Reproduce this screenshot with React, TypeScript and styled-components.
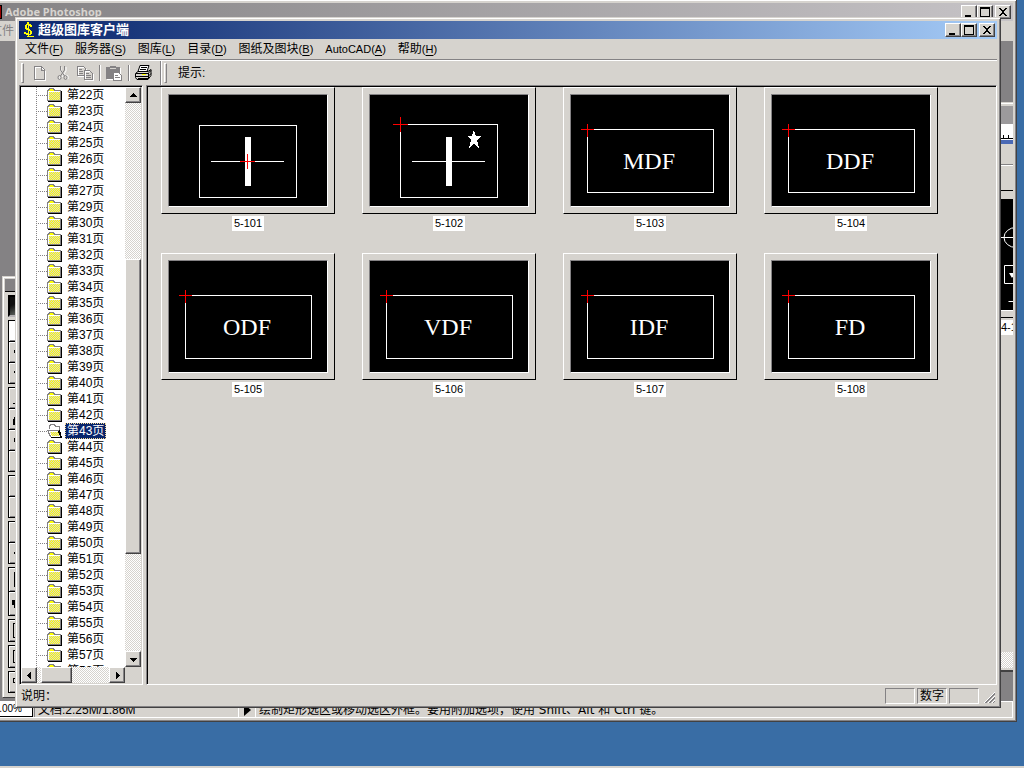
import React from 'react';
import styled, { createGlobalStyle, css } from 'styled-components';

const face = '#d6d3ce';
const shade = '#848284';
const dark = '#424142';
const dither = css`
  background: repeating-conic-gradient(#ffffff 0 25%, ${face} 0 50%) 0 0 / 2px 2px;
`;

const GlobalStyle = createGlobalStyle`
  * { box-sizing: border-box; }
  html, body { margin: 0; height: 100%; overflow: hidden; }
  body {
    font-family: "Liberation Sans", "Noto Sans CJK SC", sans-serif;
    font-size: 12px;
    line-height: 16px;
    color: #000;
  }
  button, input { font: inherit; color: inherit; border: 0; padding: 0; border-radius: 0; }
  ul { list-style: none; margin: 0; padding: 0; }
  svg { display: block; flex: none; }
`;

const Desktop = styled.div`
  position: relative;
  height: 100vh;
  overflow: hidden;
  background: #396da5;
  border-bottom: 2px solid ${face};
`;

const WindowFrame = styled.section`
  position: absolute;
  display: flex;
  flex-direction: column;
  background: ${face};
  border: 1px solid;
  border-color: ${face} ${dark} ${dark} ${face};
  box-shadow: inset 1px 1px 0 #fff, inset -1px -1px 0 ${shade};
  padding: 3px;
  overflow: hidden;
`;

const BackWindow = styled(WindowFrame)`
  top: -1px;
  left: -20px;
  right: 7px;
  bottom: 44px;
`;

const FrontWindow = styled(WindowFrame)`
  top: 17px;
  left: 15px;
  right: 23px;
  bottom: 58px;
`;

const TitleBar = styled.header<{ $active?: boolean }>`
  display: flex;
  flex: none;
  align-items: center;
  height: 18px;
  padding: 0 2px 0 4px;
  gap: 3px;
  font-weight: bold;
  font-family: ${p => (p.$active ? 'inherit' : '"Noto Sans", sans-serif')};
  font-size: ${p => (p.$active ? '13px' : '11px')};
  color: ${p => (p.$active ? '#fff' : face)};
  background: ${p =>
    p.$active
      ? 'linear-gradient(90deg, #08246b, #a5cbf7)'
      : 'linear-gradient(90deg, #848284, #c6c3c6)'};
`;

const TitleText = styled.h1`
  flex: 1;
  margin: 0;
  font: inherit;
  line-height: 18px;
  white-space: nowrap;
`;

const Raised = styled.button`
  display: flex;
  flex: none;
  align-items: center;
  justify-content: center;
  background: ${face};
  border: 1px solid;
  border-color: #fff ${dark} ${dark} #fff;
  box-shadow: inset -1px -1px 0 ${shade};
`;

const CaptionButton = styled(Raised)`
  width: 16px;
  height: 14px;
`;

const CaptionButtons = styled.div`
  display: flex;
  & > :last-child { margin-left: 2px; }
`;

const MenuBar = styled.nav`
  display: flex;
  flex: none;
  height: 20px;
`;

const MenuItem = styled.button<{ $small?: boolean }>`
  background: none;
  padding: 0 6px;
  line-height: 20px;
  white-space: nowrap;
  font-size: ${p => (p.$small ? '11px' : '12px')};
`;

const Mnemonic = styled.span`
  font-size: 11px;
  u { text-underline-offset: 2px; }
`;

const Toolbar = styled.div`
  display: flex;
  flex: none;
  align-items: center;
  height: 26px;
  border-top: 1px solid ${shade};
  box-shadow: inset 0 1px 0 #fff;
  padding: 1px 2px 0;
`;

const Grip = styled.span`
  width: 3px;
  height: 20px;
  border: 1px solid;
  border-color: #fff ${shade} ${shade} #fff;
`;

const ToolButton = styled.button`
  display: flex;
  align-items: center;
  justify-content: center;
  width: 23px;
  height: 22px;
  background: none;
`;

const Divider = styled.span<{ $tall?: boolean }>`
  width: 2px;
  height: ${p => (p.$tall ? '24px' : '16px')};
  margin: 0 2px;
  border-left: 1px solid ${shade};
  border-right: 1px solid #fff;
`;

const ToolGroup = styled.div`
  display: flex;
  align-items: center;
  padding: 0 3px 0 4px;
`;

const Hint = styled.span`
  padding-left: 11px;
`;

const Body = styled.main`
  display: flex;
  flex: 1;
  min-height: 0;
  gap: 3px;
`;

const Sunken = styled.div`
  border: 1px solid;
  border-color: ${shade} #fff #fff ${shade};
  box-shadow: inset 1px 1px 0 #000;
  padding: 1px;
  min-height: 0;
`;

const TreePane = styled(Sunken)`
  display: grid;
  flex: none;
  width: 124px;
  grid-template: minmax(0, 1fr) 16px / minmax(0, 1fr) 16px;
`;

const Tree = styled.ul`
  overflow: hidden;
  background:
    repeating-linear-gradient(${shade} 0 1px, transparent 1px 2px) 15px 0 / 1px 100% no-repeat,
    #fff;
`;

const TreeRow = styled.li`
  display: flex;
  align-items: center;
  height: 16px;
  padding-left: 15px;
`;

const Branch = styled.span`
  width: 11px;
  height: 1px;
  background: repeating-linear-gradient(90deg, ${shade} 0 1px, transparent 1px 2px);
`;

const TreeLabel = styled.button<{ $selected: boolean }>`
  height: 16px;
  margin-left: 2px;
  padding: 0 1px;
  line-height: 14px;
  white-space: nowrap;
  color: ${p => (p.$selected ? '#fff' : '#000')};
  background: ${p => (p.$selected ? '#08246b' : 'none')};
  border: 1px dotted ${p => (p.$selected ? '#f7db94' : 'transparent')};
`;

const ScrollBar = styled.div<{ $horizontal?: boolean }>`
  display: flex;
  flex-direction: ${p => (p.$horizontal ? 'row' : 'column')};
  ${dither}
`;

const ScrollButton = styled(Raised)`
  width: 16px;
  height: 16px;
`;

const Track = styled.div<{ $size: number }>`
  flex: ${p => p.$size} 1 0;
`;

const Thumb = styled(Raised)<{ $size: number }>`
  flex: ${p => p.$size} 1 0;
`;

const Gallery = styled(Sunken)`
  display: flex;
  flex: 1;
  flex-wrap: wrap;
  align-content: flex-start;
  gap: 22px 27px;
  padding: 1px 1px 1px 14px;
  overflow: hidden;
`;

const Card = styled.figure`
  display: flex;
  flex-direction: column;
  align-items: center;
  gap: 2px;
  margin: 0;
`;

const CardFrame = styled.button`
  padding: 6px;
  background: ${face};
  border: 1px solid;
  border-color: #fff #000 #000 #fff;
`;

const Drawing = styled.svg`
  width: 160px;
  height: 113px;
  background: #000;
  border: 1px solid;
  border-color: ${shade} #fff #fff ${shade};
  shape-rendering: crispEdges;
`;

const BlockName = styled.text`
  fill: #fff;
  font-family: "Liberation Serif", serif;
  font-size: 24px;
  text-anchor: middle;
`;

const CardCaption = styled.figcaption`
  padding: 0 2px;
  background: #fff;
  font-size: 11px;
  line-height: 15px;
`;

const StatusBar = styled.footer`
  display: flex;
  flex: none;
  align-items: flex-end;
  height: 19px;
  gap: 2px;
  padding: 0 1px 0 2px;
`;

const StatusText = styled.span`
  flex: 1;
  line-height: 16px;
`;

const StatusField = styled.span`
  width: 30px;
  height: 16px;
  border: 1px solid;
  border-color: ${shade} #fff #fff ${shade};
  text-align: center;
  line-height: 14px;
`;

const GreyMenu = styled(MenuBar)`
  color: ${shade};
`;

const Workspace = styled.div`
  display: flex;
  flex: 1;
  min-height: 0;
  justify-content: space-between;
  align-items: flex-start;
  background: ${shade};
`;

const Palette = styled.aside`
  display: flex;
  flex-direction: column;
  gap: 3px;
  width: 62px;
  margin: 235px 0 0 18px;
  padding: 2px 2px 4px;
  background: ${face};
  border: 1px solid;
  border-color: ${face} ${dark} ${dark} ${face};
  box-shadow: inset 1px 1px 0 #fff;
`;

const PaletteTitle = styled.div`
  height: 13px;
  background: ${shade};
  border-bottom: 1px solid #000;
`;

const PaletteLogo = styled.div`
  height: 22px;
  margin-left: 3px;
  background: linear-gradient(150deg, #101010 20%, #6b716b 50%, #181818 80%);
  border: 2px solid;
  border-color: #000 ${face} #b5b2b5 #000;
`;

const PaletteGroup = styled.div<{ $height: number }>`
  display: flex;
  flex-direction: column;
  height: ${p => p.$height}px;
  margin-left: 3px;
  padding: 1px;
  gap: 1px;
  background: #000;
`;

const PaletteTool = styled.button<{ $pressed?: boolean }>`
  display: flex;
  flex: 1;
  align-items: center;
  padding-left: 3px;
  background: ${p => (p.$pressed ? '#fff' : face)};
  box-shadow: inset 1px 1px 0 #fff, inset 0 -1px 0 ${shade};
`;

const DocWindow = styled.div`
  display: flex;
  flex-direction: column;
  align-self: stretch;
  width: 30px;
  margin: 61px 0 29px;
  background: ${face};
  border-bottom: 2px solid ${dark};
  border-top: 1px solid ${face};
  box-shadow: inset 0 1px 0 #fff;
  padding-top: 3px;
`;

const DocTitle = styled.div`
  height: 18px;
  background: #9c9a9c;
`;

const DocRuler = styled.div`
  height: 20px;
  background: #fff;
  border-bottom: 4px solid #4a69b5;
`;

const DocTools = styled.div`
  height: 47px;
  background: linear-gradient(${shade} 0 1px, #fff 1px 2px) 0 20px / 100% 2px no-repeat;
  border-bottom: 1px solid #000;
`;

const DocCanvas = styled.div`
  margin-top: 8px;
  background: #000;
  border-bottom: 1px solid #fff;
`;

const DocCaption = styled.div`
  margin-top: 6px;
  padding: 2px 0 0 18px;
  border-top: 1px solid #000;
  font-size: 11px;
  line-height: 15px;
  span { display: block; background: #fff; overflow: hidden; white-space: nowrap; }
`;

const DocScroll = styled.div`
  height: 16px;
  margin: auto 0 2px;
  ${dither}
`;

const BackStatus = styled.footer`
  display: flex;
  flex: none;
  height: 17px;
  border-top: 1px solid #fff;
  border-bottom: 1px solid #fff;
  white-space: nowrap;
`;

const ZoomInput = styled.input`
  width: 49px;
  background: #fff;
  border-right: 1px solid #000;
  border-bottom: 1px solid #000;
  padding-right: 10px;
  font-size: 10px;
  text-align: right;
`;

const DocSize = styled.span`
  width: 205px;
  margin-left: 1px;
  padding-left: 3px;
  border-left: 1px solid ${shade};
  border-right: 1px solid #fff;
`;

const SizeButton = styled.button`
  display: flex;
  align-items: center;
  justify-content: center;
  width: 17px;
  background: none;
  border-right: 1px solid #fff;
`;

const BackTip = styled.span`
  flex: 1;
  padding-left: 3px;
  border-right: 1px solid #fff;
  font-family: "DejaVu Sans", "Noto Sans CJK SC", sans-serif;
`;

const captionPaths = [
  { name: '最小化', d: 'M3 9h6v2H3z' },
  { name: '最大化', d: 'M2 1h10v10H2zM3 3v7h8V3z' },
  { name: '关闭', d: 'M3 2h2v1h1v1h2V3h1V2h2v1h-1v1H9v1H8v2h1v1h1v1h1v1H9V9H8V8H6v1H5v1H3V9h1V8h1V7h1V5H5V4H4V3H3z' },
];

function WindowButtons() {
  return (
    <CaptionButtons>
      {captionPaths.map(b => (
        <CaptionButton key={b.name} type="button" aria-label={b.name}>
          <svg width="14" height="12" shapeRendering="crispEdges">
            <path d={b.d} fillRule="evenodd" />
          </svg>
        </CaptionButton>
      ))}
    </CaptionButtons>
  );
}

function AppIcon() {
  return (
    <svg width="12" height="16" viewBox="0 0 12 16" shapeRendering="crispEdges" fill="#ffff00">
      <path d="M4 0h2v2h2v1h1v2H7V4H6v3h1v1h1v1h1v3H8v1H6v1h5v1H4v-1h1v-1H3v-1H1v-2h2v1h2V8H3V7H2V3h1V2h1zM4 3v3h1V3zM6 9v3h1V9z" fillRule="evenodd" />
    </svg>
  );
}

function Arrow({ dir }: { dir: 'up' | 'down' | 'left' | 'right' }) {
  const d = {
    up: 'M6 4h1v1h1v1h1v1h1v1H3V7h1V6h1V5h1z',
    down: 'M3 5h7v1H9v1H8v1H7v1H6V8H5V7H4V6H3z',
    left: 'M8 3v7H7V9H6V8H5V7H4V6h1V5h1V4h1V3z',
    right: 'M5 3h1v1h1v1h1v1h1v1H8v1H7v1H6v1H5z',
  }[dir];
  return (
    <svg width="13" height="13" shapeRendering="crispEdges">
      <path d={d} />
    </svg>
  );
}

function FolderIcon({ open }: { open: boolean }) {
  return (
    <svg width="16" height="14" viewBox="0 0 16 14" shapeRendering="crispEdges">
      {open ? (
        <>
          <path d="M3 1h5v1h5v5h2v6H3V9H1V6h1V2h1z" fill="#fff" />
          <path d="M3 8h8v1h1v2h1v1H5v-1H4V9H3z" fill="url(#folder)" />
          <path d="M2.500 5V1.500h1v-1h4v1h1v1h4v4M0 6.500h11v1h1v1M1.500 7v2h1v2h1v2" fill="none" stroke={shade} />
          <path d="M12 6h1v2h1v4h1v2H4v-1h9v-2h-1V9h-1V7h1z" />
        </>
      ) : (
        <>
          <path d="M1 3h1V1h5v2h7v9H1z" fill="#fff" />
          <path d="M2 1h5v2H1V2h1z" fill="#ffff00" />
          <path d="M2 4h11v8H2z" fill="url(#folder)" />
          <path d="M.5 12.500v-10h1v-1h1v-1h4v1h1v1h6v10H0" fill="none" stroke={shade} />
          <path d="M14 3h1v11H1v-1h13z" />
        </>
      )}
    </svg>
  );
}

const toolIcons: Record<string, React.ReactNode> = {
  新建: (
    <svg width="17" height="16" fill="none" shapeRendering="crispEdges">
      <path d="M4.500 2.500h6l4 4v9h-10z" stroke="#fff" />
      <path d="M3.500 1.500h7l3 3v10h-10zM10.500 2v3h3" stroke={shade} />
    </svg>
  ),
  剪切: (
    <svg width="15" height="16" fill="none">
      <path d="M6 2v4l2 3M11 2v4l-4 6M5 11v3M10 10l3 1v3" stroke="#fff" />
      <path d="M5.500 1v4l4 6M9.500 1v4l-4 6" stroke={shade} />
      <ellipse cx="4.500" cy="12.500" rx="1.500" ry="2" stroke={shade} />
      <ellipse cx="10.500" cy="12.500" rx="1.500" ry="2" stroke={shade} />
    </svg>
  ),
  复制: (
    <svg width="17" height="16" fill="none" shapeRendering="crispEdges">
      <path d="M1.500 2.500h6l2 2v7h-8z" stroke="#fff" />
      <path d="M.5 1.500h6l2 2v7h-8zM2 4.500h3M2 6.500h4M2 8.500h4" stroke={shade} />
      <path d="M8.500 6.500h5l3 3v6h-8z" fill={face} stroke="#fff" />
      <path d="M7.500 5.500h5l3 3v6h-8zM9 8.500h3M9 10.500h5M9 12.500h5" stroke={shade} />
    </svg>
  ),
  粘贴: (
    <svg width="17" height="16" shapeRendering="crispEdges">
      <path d="M1 3h14v12H1z" fill="#fff" />
      <path d="M0 2h4V1h6v1h4v12H0z" fill={shade} />
      <path d="M4 3h6v1H4z" fill={face} />
      <path d="M7.500 7.500h5l3 3v5h-8z" fill="#fff" stroke={shade} />
      <path d="M9 10.500h3M9 12.500h5" stroke={shade} />
    </svg>
  ),
  打印: (
    <svg width="18" height="16">
      <path d="M5 .5h9l-2 6H3z" fill="#fff" stroke="#000" />
      <path d="M6 2.500h6M5 4.500h6" stroke="#000" />
      <path d="M3 6.500h10l3-2v6l-3 4H2l-1.500-2v-4z" fill={face} stroke="#000" />
      <path d="M1 8.500h12l3-3M1 11.500h12l3-3M13.500 8v6M3 13.500h10" stroke="#000" fill="none" />
      <path d="M7 9.500h4" stroke="#ffff00" />
    </svg>
  ),
};

function Tool({ name }: { name: string }) {
  return (
    <ToolButton type="button" aria-label={name}>
      {toolIcons[name]}
    </ToolButton>
  );
}

const menus = [
  ['文件', 'F'],
  ['服务器', 'S'],
  ['图库', 'L'],
  ['目录', 'D'],
  ['图纸及图块', 'B'],
  ['AutoCAD', 'A'],
  ['帮助', 'H'],
];

// The catalogue lists page 28 before page 27.
const pages = [22, 23, 24, 25, 26, 28, 27].concat(Array.from({ length: 30 }, (_, i) => 29 + i));

const blocks = [
  { id: '5-101', kind: 'socket' },
  { id: '5-102', kind: 'star' },
  { id: '5-103', name: 'MDF' },
  { id: '5-104', name: 'DDF' },
  { id: '5-105', name: 'ODF' },
  { id: '5-106', name: 'VDF' },
  { id: '5-107', name: 'IDF' },
  { id: '5-108', name: 'FD' },
];

function BlockDrawing({ kind, name }: { kind?: string; name?: string }) {
  if (name) {
    return (
      <Drawing viewBox="0 0 158 111">
        <rect x="16.500" y="34.500" width="126" height="63" fill="none" stroke="#fff" />
        <path d="M10 34.500h13M16.500 29v13" stroke="#ff0000" />
        <BlockName x="78" y="74">{name}</BlockName>
      </Drawing>
    );
  }
  const star = kind === 'star';
  return (
    <Drawing viewBox="0 0 158 111">
      <rect x="30.500" y={star ? 29.5 : 30.5} width="97" height={star ? 73 : 72} fill="none" stroke="#fff" />
      <path d="M42 66.500h73" stroke="#fff" />
      <path d="M76 42h6v49h-6z" fill="#fff" />
      {star && <path d="M104 35l2 6h5l-4 4 2 8-5-4-5 4 2-8-4-4h5z" fill="#fff" />}
      <path d={star ? 'M23 29.500h15M30.500 22v15' : 'M71 66.500h15M78.500 59v15'} stroke="#ff0000" />
    </Drawing>
  );
}

const toolGroups = [
  { height: 64, marks: ['M3 1h2v2H3zM3 6h2v3H3zM3 12h2v2H3z', 'M3 3h2v1H3zM2 5h2v3H2zM3 9h2v3H3z', 'M2 5h3v2H2z'] },
  { height: 85, marks: ['M4 8h1v2H3v2h2v1H1v-1h2v-3h1z', 'M2 5h3v1H3v6h2v1H2zM1 7h1v6H1z', 'M2 5h3v4H2z', ''] },
  { height: 43, marks: ['', ''] },
  { height: 43, marks: ['M4 0h1v15H4z', 'M3 5h1v1H3zM2 6h1v2H2zM3 8h1v1H3z'] },
  { height: 49, marks: ['M2 0h1v15H2zM4 0h1v15H4z', 'M0 4h5v8H2V9H0z'] },
  { height: 23, marks: ['M1 0h4v1H2v13h3v1H1z'] },
  { height: 23, marks: ['M1 1h4v1H2v11h3v1H1zM3 5h2v1H4v4h1v1H3z'] },
  { height: 22, marks: ['M1 3h4v1H2v3h3v1H1z'] },
];

function PhotoshopWindow() {
  return (
    <BackWindow aria-label="Adobe Photoshop">
      <TitleBar>
        <svg width="14" height="14">
          <path d="M0 0h14v14H0z" />
          <path d="M0 1h13v12H0z" fill="#940000" />
        </svg>
        <TitleText>Adobe Photoshop</TitleText>
        <WindowButtons />
      </TitleBar>
      <GreyMenu>
        <MenuItem type="button">文件</MenuItem>
      </GreyMenu>
      <Workspace>
        <Palette>
          <PaletteTitle />
          <PaletteLogo />
          {toolGroups.map((g, i) => (
            <PaletteGroup key={i} $height={g.height}>
              {g.marks.map((d, j) => (
                <PaletteTool key={j} type="button" aria-label={`工具 ${i + 1}-${j + 1}`} $pressed={i === 0 && j === 0}>
                  <svg width="12" height="15" shapeRendering="crispEdges"><path d={d} /></svg>
                </PaletteTool>
              ))}
            </PaletteGroup>
          ))}
        </Palette>
        <DocWindow>
          <DocTitle />
          <DocRuler>
            <svg width="30" height="16" shapeRendering="crispEdges">
              <path d="M0 14h30v1H0zM20 11h1v3h-1zM25 11h1v3h-1z" />
            </svg>
          </DocRuler>
          <DocTools />
          <DocCanvas>
            <svg width="30" height="111" fill="none" stroke="#fff">
              <path d="M18 38.500h12M25.500 102.500h5" />
              <ellipse cx="33" cy="38.500" rx="12" ry="10" />
              <path d="M21.500 66.500h12v18h-12z" />
              <path d="M26 74h6l-3 5z" fill="#fff" stroke="none" />
            </svg>
          </DocCanvas>
          <DocCaption><span>4-1</span></DocCaption>
          <DocScroll />
        </DocWindow>
      </Workspace>
      <BackStatus>
        <ZoomInput aria-label="缩放" defaultValue=".00%" />
        <DocSize>文档:2.25M/1.86M</DocSize>
        <SizeButton type="button" aria-label="状态选项">
          <svg width="7" height="12"><path d="M0 0l7 6-7 6z" /></svg>
        </SizeButton>
        <BackTip>绘制矩形选区或移动选区外框。要用附加选项，使用 Shift、Alt 和 Ctrl 键。</BackTip>
      </BackStatus>
    </BackWindow>
  );
}

export default function App() {
  const [selected, setSelected] = React.useState(43);
  return (
    <>
      <GlobalStyle />
      <Desktop>
        <PhotoshopWindow />
        <FrontWindow aria-label="超级图库客户端">
          <svg width="0" height="0" aria-hidden="true">
            <pattern id="folder" width="2" height="2" patternUnits="userSpaceOnUse">
              <path d="M0 0h2v2H0z" fill={face} />
              <path d="M0 0h1v1H0zM1 1h1v1H1z" fill="#ffff00" />
            </pattern>
          </svg>
          <TitleBar $active>
            <AppIcon />
            <TitleText>超级图库客户端</TitleText>
            <WindowButtons />
          </TitleBar>
          <MenuBar>
            {menus.map(([label, key]) => (
              <MenuItem key={key} type="button" $small={label === 'AutoCAD'}>
                {label}
                <Mnemonic>(<u>{key}</u>)</Mnemonic>
              </MenuItem>
            ))}
          </MenuBar>
          <Toolbar>
            <Grip />
            <ToolGroup>
              <Tool name="新建" />
              <Tool name="剪切" />
              <Tool name="复制" />
              <Divider />
              <Tool name="粘贴" />
              <Divider />
              <Tool name="打印" />
            </ToolGroup>
            <Divider $tall />
            <Grip />
            <Hint>提示:</Hint>
          </Toolbar>
          <Body>
            <TreePane>
              <Tree>
                {pages.map(n => (
                  <TreeRow key={n}>
                    <Branch />
                    <FolderIcon open={n === selected} />
                    <TreeLabel type="button" $selected={n === selected} onClick={() => setSelected(n)}>
                      {`第${n}页`}
                    </TreeLabel>
                  </TreeRow>
                ))}
              </Tree>
              <ScrollBar>
                <ScrollButton type="button" aria-label="向上"><Arrow dir="up" /></ScrollButton>
                <Track $size={157} />
                <Thumb type="button" aria-label="垂直滚动" $size={294} />
                <Track $size={98} />
                <ScrollButton type="button" aria-label="向下"><Arrow dir="down" /></ScrollButton>
              </ScrollBar>
              <ScrollBar $horizontal>
                <ScrollButton type="button" aria-label="向左"><Arrow dir="left" /></ScrollButton>
                <Track $size={4} />
                <Thumb type="button" aria-label="水平滚动" $size={30} />
                <Track $size={38} />
                <ScrollButton type="button" aria-label="向右"><Arrow dir="right" /></ScrollButton>
              </ScrollBar>
            </TreePane>
            <Gallery>
              {blocks.map(b => (
                <Card key={b.id}>
                  <CardFrame type="button" aria-label={b.id}>
                    <BlockDrawing kind={b.kind} name={b.name} />
                  </CardFrame>
                  <CardCaption>{b.id}</CardCaption>
                </Card>
              ))}
            </Gallery>
          </Body>
          <StatusBar>
            <StatusText>说明：</StatusText>
            <StatusField />
            <StatusField>数字</StatusField>
            <StatusField />
            <svg width="15" height="16" fill="none">
              <path d="M3 15L14 4M7 15l7-7M11 15l3-3" stroke="#fff" />
              <path d="M4 15L14 5M5 15l9-9M8 15l6-6M9 15l5-5M12 15l2-2" stroke={shade} />
            </svg>
          </StatusBar>
        </FrontWindow>
      </Desktop>
    </>
  );
}
